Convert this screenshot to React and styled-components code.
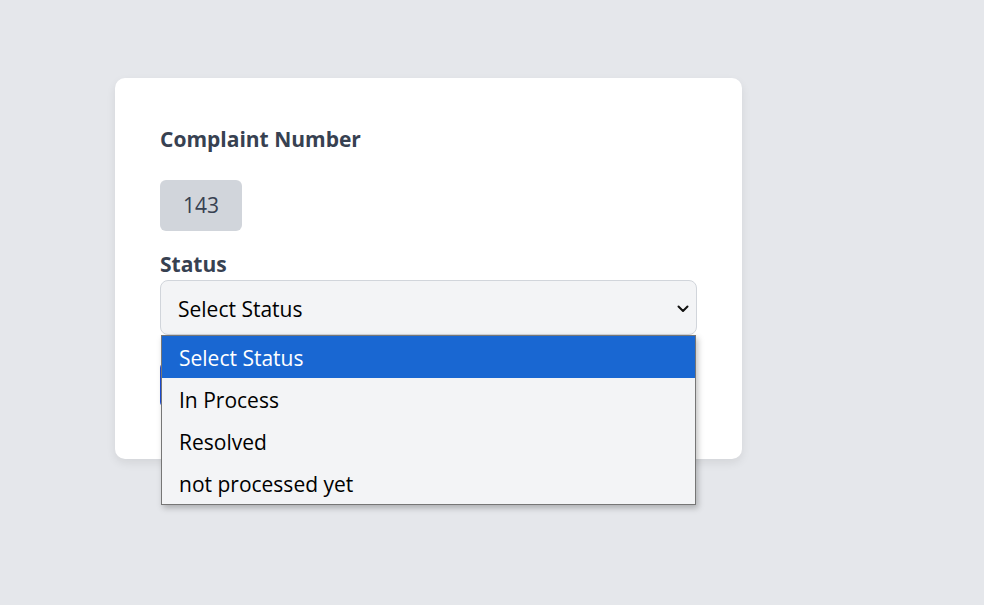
import React, { useState } from 'react'
import styled, { createGlobalStyle } from 'styled-components'

const GlobalStyle = createGlobalStyle`
    html, body {
        margin: 0;
        padding: 0;
        background: #e5e7eb;
        font-family: "Open Sans", "Noto Sans", sans-serif;
    }
`

const options = ['Select Status', 'In Process', 'Resolved', 'not processed yet']

const App = () => {
    const [status, setStatus] = useState('Select Status')
    const [open, setOpen] = useState(true)

    const onPick = (value) => {
        setStatus(value)
        setOpen(false)
    }

    return (
        <Page>
            <GlobalStyle />
            <Card>
                <Title>Complaint Number</Title>
                <Badge>143</Badge>
                <Label>Status</Label>
                <SelectWrap>
                    <SelectBox onClick={() => setOpen(!open)}>
                        <span>{status}</span>
                        <svg width="12" height="8" viewBox="0 0 12 8">
                            <path d="M1.5 1.5 L6 6 L10.5 1.5" fill="none" stroke="#111" strokeWidth="2" strokeLinecap="round" strokeLinejoin="round" />
                        </svg>
                    </SelectBox>
                    {open && (
                        <OptionList>
                            {options.map((opt) => (
                                <Option key={opt} active={opt === status} onClick={() => onPick(opt)}>
                                    {opt}
                                </Option>
                            ))}
                        </OptionList>
                    )}
                </SelectWrap>
                <SubmitButton aria-label="Update" />
            </Card>
        </Page>
    )
}

const Page = styled.div`
    min-height: 605px;
    padding: 78px 0 0 115px;
    box-sizing: border-box;
`

const Card = styled.div`
    width: 627px;
    box-sizing: border-box;
    padding: 47px 45px 51px;
    background: white;
    border-radius: 10px;
    box-shadow: 0 4px 10px rgba(0, 0, 0, 0.08);
    display: flex;
    flex-direction: column;
    align-items: flex-start;
`

const Title = styled.div`
    font-size: 21px;
    line-height: 29px;
    font-weight: 700;
    color: #374151;
`

const Badge = styled.div`
    margin-top: 26px;
    padding: 10px 23px 11px;
    font-size: 21px;
    line-height: 30px;
    color: #374151;
    background: #d1d5db;
    border-radius: 6px;
`

const Label = styled.div`
    margin-top: 19px;
    font-size: 21px;
    line-height: 28px;
    font-weight: 700;
    color: #374151;
`

const SelectWrap = styled.div`
    position: relative;
    align-self: stretch;
    margin-top: 2px;
`

const SelectBox = styled.div`
    height: 55px;
    box-sizing: border-box;
    display: flex;
    align-items: center;
    justify-content: space-between;
    padding: 2px 6px 0 17px;
    font-size: 21px;
    color: #000;
    background: #f3f4f6;
    border: 1px solid #d1d5db;
    border-radius: 8px;
    cursor: pointer;

    svg {
        margin-right: 1px;
    }
`

const OptionList = styled.div`
    position: absolute;
    top: 100%;
    left: 1px;
    right: 1px;
    z-index: 2;
    background: #f3f4f6;
    border: 1px solid #767676;
    box-shadow: 2px 3px 6px rgba(0, 0, 0, 0.25);
`

const Option = styled.div`
    height: 42px;
    display: flex;
    align-items: center;
    padding: 1px 0 0 17px;
    box-sizing: border-box;
    font-size: 21px;
    color: ${(p) => (p.active ? '#fff' : '#000')};
    background: ${(p) => (p.active ? '#1967d2' : 'transparent')};
    cursor: pointer;
`

const SubmitButton = styled.button`
    margin-top: 27px;
    width: 120px;
    height: 46px;
    background: #1d4ed8;
    border: none;
    border-radius: 6px;
`

export default App
